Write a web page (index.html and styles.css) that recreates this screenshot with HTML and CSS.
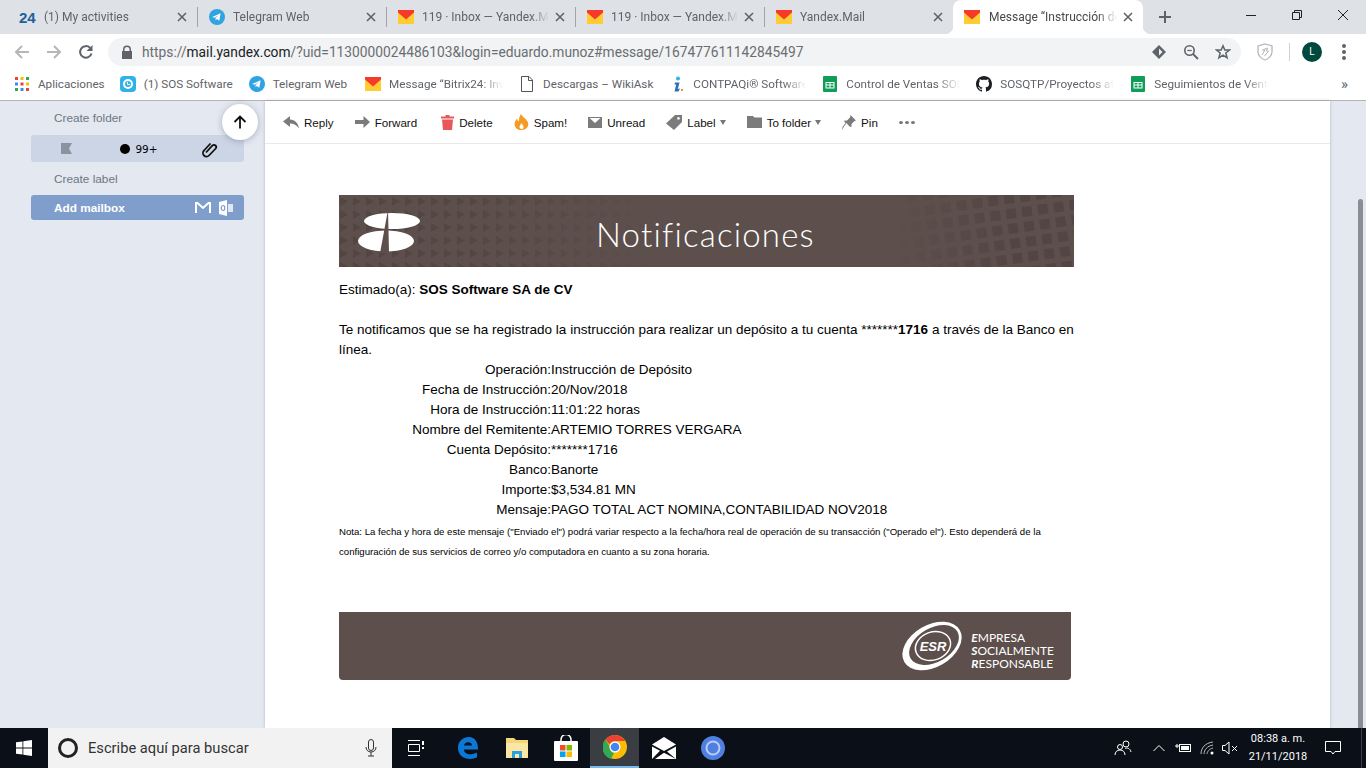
FILE: index.html
```html
<!DOCTYPE html>
<html lang="en">
<head>
    <meta charset="UTF-8">
    <title>Message "Instrucción de Depósito" — Yandex.Mail</title>
    <link rel="stylesheet" href="styles.css">
</head>
<body>
    <svg class="sprite" width="0" height="0">
        <symbol id="ya" viewBox="0 0 16 16">
            <rect y="1" width="16" height="14" fill="#ffcc33"/>
            <path d="M0 1H16V3.500L8 10.500 0 3.500Z" fill="#f5392b"/>
        </symbol>
        <symbol id="tg" viewBox="0 0 16 16">
            <circle cx="8" cy="8" r="8" fill="#2fa4e0"/>
            <path d="M3.200 7.900 11.600 4.300 10.300 11.800 7.900 10 6.700 11.300 6.500 9.100 10.200 5.900 5.500 8.800Z" fill="#fff"/>
        </symbol>
        <symbol id="sheet" viewBox="0 0 16 16">
            <rect x="1" width="14" height="16" rx="1" fill="#0f9d58"/>
            <path d="M3.500 6H12.500V12.500H3.500ZM4.500 7V8.600H7.500V7ZM8.500 7V8.600H11.500V7ZM4.500 9.600V11.500H7.500V9.600ZM8.500 9.600V11.500H11.500V9.600Z" fill="#fff" fill-rule="evenodd"/>
        </symbol>
        <symbol id="close" viewBox="0 0 10 10">
            <path d="M1 1 9 9M9 1 1 9" stroke="#5f6368" stroke-width="1.600" fill="none"/>
        </symbol>
    </svg>

    <div class="tabstrip">
        <div class="tab"><span class="tab-24">24</span><span class="tab-title">(1) My activities</span><svg class="tab-x"><use href="#close"/></svg></div>
        <div class="tab"><svg class="fav"><use href="#tg"/></svg><span class="tab-title">Telegram Web</span><svg class="tab-x"><use href="#close"/></svg></div>
        <div class="tab"><svg class="fav"><use href="#ya"/></svg><span class="tab-title">119 · Inbox — Yandex.Mail</span><svg class="tab-x"><use href="#close"/></svg></div>
        <div class="tab"><svg class="fav"><use href="#ya"/></svg><span class="tab-title">119 · Inbox — Yandex.Mail</span><svg class="tab-x"><use href="#close"/></svg></div>
        <div class="tab before-active"><svg class="fav"><use href="#ya"/></svg><span class="tab-title">Yandex.Mail</span><svg class="tab-x"><use href="#close"/></svg></div>
        <div class="tab active"><svg class="fav"><use href="#ya"/></svg><span class="tab-title">Message “Instrucción de Depósito”</span><svg class="tab-x"><use href="#close"/></svg></div>
        <svg class="newtab" width="14" height="14" viewBox="0 0 14 14"><path d="M7 1V13M1 7H13" stroke="#5f6368" stroke-width="2"/></svg>
        <div class="winctl">
            <div class="winbtn"><svg width="12" height="12" viewBox="0 0 12 12"><path d="M1 6.500H11" stroke="#222"/></svg></div>
            <div class="winbtn"><svg width="12" height="12" viewBox="0 0 12 12"><path d="M1.500 3.500H8.500V10.500H1.500ZM3.500 3.500V1.500H10.500V8.500H8.500" stroke="#222" fill="none"/></svg></div>
            <div class="winbtn"><svg width="12" height="12" viewBox="0 0 12 12"><path d="M1 1 11 11M11 1 1 11" stroke="#222"/></svg></div>
        </div>
    </div>

    <div class="addressbar">
        <svg class="nav-ico" width="16" height="16" viewBox="0 0 16 16"><path d="M15 8H2M8 2 2 8l6 6" stroke="#b4b6b9" stroke-width="2" fill="none"/></svg>
        <svg class="nav-ico" width="16" height="16" viewBox="0 0 16 16"><path d="M1 8H14M8 2l6 6-6 6" stroke="#b4b6b9" stroke-width="2" fill="none"/></svg>
        <svg class="nav-ico" width="16" height="16" viewBox="0 0 16 16"><path d="M13.500 9.500A5.800 5.800 0 1 1 12 3.800" stroke="#5f6368" stroke-width="2" fill="none"/><path d="M14.500 1V7H8.500Z" fill="#5f6368"/></svg>
        <div class="omnibox">
            <svg class="lock" width="12" height="14" viewBox="0 0 12 14"><path d="M2 6V4.500a4 4 0 0 1 8 0V6h1v8H1V6ZM3.500 6h5V4.500a2.500 2.500 0 0 0-5 0Z" fill="#5f6368" fill-rule="evenodd"/></svg>
            <span class="url">https://<b>mail.yandex.com</b>/?uid=1130000024486103&amp;login=eduardo.munoz#message/167477611142845497</span>
            <svg class="omni-ico" width="16" height="16" viewBox="0 0 16 16"><path d="M8 1 15 8 8 15 1 8Z" fill="#5f6368"/><path d="M8 4.500 11.500 8 8 11.500Z" fill="#f1f3f4"/></svg>
            <svg class="omni-ico" width="16" height="16" viewBox="0 0 16 16"><circle cx="6.500" cy="6.500" r="4.700" stroke="#5f6368" stroke-width="1.600" fill="none"/><path d="M10 10 15 15" stroke="#5f6368" stroke-width="1.800"/><path d="M4.300 6.500H8.700" stroke="#5f6368" stroke-width="1.200"/></svg>
            <svg class="omni-ico" width="16" height="16" viewBox="0 0 16 16"><path d="M8 1.800 9.800 6H14.600L10.800 9 12.100 13.800 8 11.100 3.900 13.800 5.200 9 1.400 6H6.200Z" stroke="#5f6368" stroke-width="1.500" fill="none"/></svg>
        </div>
        <svg class="shield" width="16" height="18" viewBox="0 0 16 18"><path d="M8 1 15 3V9C15 13 11 16 8 17 5 16 1 13 1 9V3Z" stroke="#b4b6b9" stroke-width="1.300" fill="none"/><path d="M5 12 8 7H5.500L10.500 5 9.500 8H11.500L7.500 13" stroke="#b4b6b9" fill="none"/></svg>
        <span class="bar-sep"></span>
        <span class="avatar">L</span>
        <span class="kebab"><i></i><i></i><i></i></span>
    </div>

    <div class="bookmarks">
        <div class="bm apps-item"><svg class="bm-ico apps" width="14" height="14" viewBox="0 0 14 14"><rect width="3" height="3" fill="#ea4335"/><rect x="5.500" width="3" height="3" fill="#fbbc05"/><rect x="11" width="3" height="3" fill="#34a853"/><rect y="5.500" width="3" height="3" fill="#4285f4"/><rect x="5.500" y="5.500" width="3" height="3" fill="#ea4335"/><rect x="11" y="5.500" width="3" height="3" fill="#fbbc05"/><rect y="11" width="3" height="3" fill="#34a853"/><rect x="5.500" y="11" width="3" height="3" fill="#4285f4"/><rect x="11" y="11" width="3" height="3" fill="#ea4335"/></svg><span>Aplicaciones</span></div>
        <div class="bm"><svg class="bm-ico" viewBox="0 0 16 16"><rect width="16" height="16" rx="4" fill="#2fb1ea"/><circle cx="8" cy="8" r="5" fill="#fff"/><circle cx="8" cy="8" r="3" fill="#2fb1ea"/><path d="M7.500 6V8.500H10" stroke="#fff" fill="none"/></svg><span>(1) SOS Software</span></div>
        <div class="bm tg-item"><svg class="bm-ico"><use href="#tg"/></svg><span>Telegram Web</span></div>
        <div class="bm cut"><svg class="bm-ico"><use href="#ya"/></svg><span>Message “Bitrix24: Invitation</span></div>
        <div class="bm"><svg class="bm-ico" viewBox="0 0 16 16"><path d="M2.500 .5H10L13.500 4V15.500H2.500ZM9.500 .5V4.500H13.500" stroke="#555" fill="#fff"/></svg><span>Descargas – WikiAsk</span></div>
        <div class="bm cut short"><svg class="bm-ico" viewBox="0 0 16 16"><circle cx="9" cy="2.500" r="2" fill="#2fb1ea"/><path d="M6 6.500H10.500L8.800 13 11 12.500 9.500 15.500H5.500L7.200 8.500 5.500 8.500Z" fill="#2a6fb8"/><rect x="12" y="13" width="2" height="2" fill="#f39c12"/></svg><span>CONTPAQi® Software y más</span></div>
        <div class="bm cut"><svg class="bm-ico"><use href="#sheet"/></svg><span>Control de Ventas SOS 2018</span></div>
        <div class="bm cut"><svg class="bm-ico" viewBox="0 0 16 16"><path fill="#1b1f23" d="M8 0C3.580 0 0 3.580 0 8c0 3.540 2.290 6.530 5.470 7.590.4.070.550-.170.550-.380 0-.190-.010-.820-.010-1.490-2.010.370-2.530-.490-2.690-.940-.090-.230-.480-.940-.820-1.130-.280-.150-.680-.520-.010-.530.630-.010 1.080.580 1.230.820.720 1.210 1.870.870 2.330.660.070-.520.280-.870.510-1.070-1.780-.2-3.640-.890-3.640-3.950 0-.870.310-1.590.820-2.150-.080-.2-.360-1.020.080-2.120 0 0 .670-.210 2.200.820.640-.180 1.320-.270 2-.270.680 0 1.360.090 2 .27 1.530-1.040 2.200-.82 2.200-.82.440 1.100.160 1.920.080 2.120.510.560.820 1.270.820 2.150 0 3.070-1.870 3.750-3.650 3.950.290.250.540.730.540 1.480 0 1.070-.010 1.930-.010 2.200 0 .210.150.460.550.380A8.013 8.013 0 0016 8c0-4.420-3.580-8-8-8z"/></svg><span>SOSQTP/Proyectos atrasados</span></div>
        <div class="bm cut"><svg class="bm-ico"><use href="#sheet"/></svg><span>Seguimientos de Ventas 2018</span></div>
        <span class="bm-more">»</span>
    </div>

    <div class="mail">
        <div class="sidebar">
            <div class="side-link">Create folder</div>
            <div class="side-filters">
                <svg width="11" height="11" viewBox="0 0 11 11"><path d="M0 0H11L8 5.500 11 11H0Z" fill="#8b93a1"/></svg>
                <span class="unread"><i></i>99+</span>
                <svg width="18" height="18" viewBox="0 0 18 18"><path d="M6 12.500 12.500 5.500a2.200 2.200 0 0 1 3.200 3L9 15.500a3.500 3.500 0 0 1-5-5L10.500 3.500" stroke="#111" stroke-width="1.800" fill="none"/></svg>
            </div>
            <div class="side-link">Create label</div>
            <div class="side-add">
                <span>Add mailbox</span>
                <svg width="16" height="12" viewBox="0 0 16 12"><path d="M1 11V1H2.500L8 6 13.500 1H15V11" stroke="#fff" stroke-width="2" fill="none"/></svg>
                <svg width="14" height="16" viewBox="0 0 14 16"><path d="M0 2 8 0V16L0 14Z" fill="#fff"/><path d="M9 4H14V12H9Z" fill="#fff" fill-opacity=".75"/><ellipse cx="4" cy="8" rx="1.800" ry="2.500" fill="none" stroke="#7f9ecb" stroke-width="1.200"/></svg>
            </div>
            <div class="scrolltop"><svg width="14" height="14" viewBox="0 0 14 14"><path d="M7 13.500V1.500M1.500 7 7 1.500 12.500 7" stroke="#111" stroke-width="1.800" fill="none"/></svg></div>
        </div>

        <div class="content">
            <div class="toolbar">
                <div class="act"><svg width="16" height="14" viewBox="0 0 16 14"><path d="M7 1 0 6.500 7 12V8.500C11 8.500 13.500 10 16 13.500 15 8 12 4.800 7 4.500Z" fill="#7b7b7b"/></svg>Reply</div>
                <div class="act"><svg width="15" height="12" viewBox="0 0 15 12"><path d="M0 4H8.500V0L15 6 8.500 12V8H0Z" fill="#7b7b7b"/></svg>Forward</div>
                <div class="act delete"><svg width="13" height="15" viewBox="0 0 13 15"><path d="M4.500 0H8.500V1.500H13V3.500H0V1.500H4.500ZM1 4.500H12L11 15H2Z" fill="#e9575a"/></svg>Delete</div>
                <div class="act"><svg width="15" height="16" viewBox="0 0 15 16"><path d="M7 0C8 3 12 4 13.800 8 15.500 12 12.500 16 7.500 16 3 16 0 13 .7 9 1 7 2.500 5.500 3 4.500 3.500 6 4 7 5 7.500 4.800 5 5.500 2 7 0ZM7.500 9C6.500 11 5.500 11.500 5.500 13 5.500 14.200 6.500 15 7.500 15 8.800 15 9.700 14 9.500 12.800 9.400 11.500 8 10.500 7.500 9Z" fill="#f59a23" fill-rule="evenodd"/></svg>Spam!</div>
                <div class="act"><svg width="14" height="11" viewBox="0 0 14 11"><path d="M0 0H14V11H0ZM1.500 1 7 6 12.500 1Z" fill="#7b7b7b" fill-rule="evenodd"/></svg>Unread</div>
                <div class="act"><svg width="16" height="15" viewBox="0 0 16 15"><path d="M9 0H16V7L8 15 0 8.500ZM12.500 2A1.400 1.400 0 1 0 12.510 2Z" fill="#7b7b7b" fill-rule="evenodd"/></svg>Label<i class="caret"></i></div>
                <div class="act"><svg width="15" height="12" viewBox="0 0 15 12"><path d="M0 0H6L7.500 1.500H15V12H0Z" fill="#7b7b7b"/></svg>To folder<i class="caret"></i></div>
                <div class="act"><svg width="14" height="15" viewBox="0 0 14 15"><path d="M8.500 0 14 5.500 12.500 6 9.500 9 9.500 12 7.500 11.500 4.500 8 2 11.500 0 15 .5 12 3.500 8 1.800 5.800 5 5.500 8 2.500Z" fill="#7b7b7b"/></svg>Pin</div>
                <div class="dots"><i></i><i></i><i></i></div>
            </div>

            <div class="letter">
                <div class="banner">
                    <svg class="banner-art" width="735" height="72" viewBox="0 0 735 72">
                        <defs>
                            <pattern id="tri" width="13" height="13" patternUnits="userSpaceOnUse"><path d="M1 2 9 6.500 1 11Z" fill="#524542"/></pattern>
                            <pattern id="sq" width="16" height="15" patternUnits="userSpaceOnUse" patternTransform="rotate(-8)"><rect x="2" y="2" width="10" height="10" fill="#524543"/></pattern>
                            <linearGradient id="fade-l"><stop offset="0" stop-color="#fff"/><stop offset=".2" stop-color="#ccc"/><stop offset=".42" stop-color="#000"/></linearGradient>
                            <linearGradient id="fade-r"><stop offset=".76" stop-color="#000"/><stop offset=".92" stop-color="#fff"/></linearGradient>
                            <mask id="mask-l"><rect width="735" height="72" fill="url(#fade-l)"/></mask>
                            <mask id="mask-r"><rect width="735" height="72" fill="url(#fade-r)"/></mask>
                        </defs>
                        <rect width="735" height="72" fill="url(#tri)" mask="url(#mask-l)"/>
                        <rect width="735" height="72" fill="url(#sq)" mask="url(#mask-r)"/>
                        <ellipse cx="53" cy="26" rx="28" ry="8" fill="#fff"/>
                        <ellipse cx="47" cy="46" rx="28" ry="10.500" fill="#fff"/>
                        <path d="M49 15 41 58H50Z" fill="#5d4f4c"/>
                    </svg>
                    <span class="banner-title">Notificaciones</span>
                </div>
                <div class="body-text">
                    <p>Estimado(a): <b>SOS Software SA de CV</b></p>
                    <p><br></p>
                    <p>Te notificamos que se ha registrado la instrucción para realizar un depósito a tu cuenta *******<b>1716</b> a través de la Banco en línea.</p>
                    <div class="details">
                        <span class="k">Operación:</span><span>Instrucción de Depósito</span>
                        <span class="k">Fecha de Instrucción:</span><span>20/Nov/2018</span>
                        <span class="k">Hora de Instrucción:</span><span>11:01:22 horas</span>
                        <span class="k">Nombre del Remitente:</span><span>ARTEMIO TORRES VERGARA</span>
                        <span class="k">Cuenta Depósito:</span><span>*******1716</span>
                        <span class="k">Banco:</span><span>Banorte</span>
                        <span class="k">Importe:</span><span>$3,534.81 MN</span>
                        <span class="k">Mensaje:</span><span>PAGO TOTAL ACT NOMINA,CONTABILIDAD NOV2018</span>
                    </div>
                    <p class="nota">Nota: La fecha y hora de este mensaje ("Enviado el") podrá variar respecto a la fecha/hora real de operación de su transacción ("Operado el"). Esto dependerá de la configuración de sus servicios de correo y/o computadora en cuanto a su zona horaria.</p>
                </div>
                <div class="footer-band">
                    <svg width="62" height="50" viewBox="0 0 62 50">
                        <ellipse cx="31" cy="25" rx="32" ry="21" fill="#fff" transform="rotate(-30 31 25)"/>
                        <ellipse cx="33" cy="24" rx="27" ry="17" fill="#5d4f4c" transform="rotate(-30 33 24)"/>
                        <ellipse cx="32" cy="25" rx="18" ry="14" fill="#5d4f4c" stroke="#fff" stroke-width="1.500" transform="rotate(-20 32 25)"/>
                        <text x="32" y="30" text-anchor="middle" class="esr-mark">ESR</text>
                    </svg>
                    <div class="esr-text"><div><b>E</b>MPRESA</div><div><b>S</b>OCIALMENTE</div><div><b>R</b>ESPONSABLE</div></div>
                </div>
            </div>
        </div>

        <div class="gutter"><div class="thumb"></div></div>
    </div>

    <div class="taskbar">
        <div class="start"><svg width="16" height="16" viewBox="0 0 16 16"><path d="M0 2.300 6.500 1.400V7.600H0ZM7.300 1.300 16 0V7.600H7.300ZM0 8.400H6.500V14.600L0 13.700ZM7.300 8.400H16V16L7.300 14.700Z" fill="#fff"/></svg></div>
        <div class="search">
            <span class="cortana"></span>
            <span class="search-text">Escribe aquí para buscar</span>
            <svg width="12" height="18" viewBox="0 0 12 18"><rect x="3.500" y=".5" width="5" height="11" rx="2.500" fill="none" stroke="#333"/><path d="M1 8C1 11 3 13 6 13S11 11 11 8M6 13V17M3 17H9" fill="none" stroke="#333"/></svg>
        </div>
        <div class="task first"><svg width="16" height="16" viewBox="0 0 16 16"><path d="M0 .5H12M0 15.500H12M.5 4.500H11.500V11.500H.5Z" stroke="#fff" fill="none"/><rect x="14" y="1" width="2" height="4" fill="#fff"/><rect x="14" y="7" width="2" height="2" fill="#fff"/></svg></div>
        <div class="task"><svg width="22" height="24" viewBox="0 0 22 24"><path d="M1 12C1 5 6 1 12 1 18 1 21 6 21 13.500H7C7 18 13 20 20 16.500V21.500C12 25 1 22 1 12ZM7 9.500H15C15 5.500 8 5 7 9.500Z" fill="#0b78d7" fill-rule="evenodd"/></svg></div>
        <div class="task"><svg width="22" height="20" viewBox="0 0 22 20"><path d="M0 0H8L10 2H22V20H0Z" fill="#f5d77a"/><rect y="5" width="22" height="15" fill="#fbe7a3"/><path d="M6 20V13H16V20H13V16H9V20Z" fill="#2aa0dc"/></svg></div>
        <div class="task"><svg width="24" height="26" viewBox="0 0 24 26"><rect y="6" width="24" height="20" rx="1" fill="#fff"/><path d="M7 8V4.500a5 5 0 0 1 10 0V8" stroke="#fff" stroke-width="1.500" fill="none"/><rect x="6" y="10" width="5.500" height="5.500" fill="#f25022"/><rect x="12.500" y="10" width="5.500" height="5.500" fill="#7fba00"/><rect x="6" y="16.500" width="5.500" height="5.500" fill="#00a4ef"/><rect x="12.500" y="16.500" width="5.500" height="5.500" fill="#ffb900"/></svg></div>
        <div class="task current"><svg width="24" height="24" viewBox="0 0 24 24"><circle cx="12" cy="12" r="12" fill="#fbbc05"/><path d="M12 0A12 12 0 0 1 22.400 6H12A6 6 0 0 0 6.500 9.500L2.500 4.600A12 12 0 0 1 12 0Z" fill="#ea4335"/><path d="M2.500 4.600 6.800 12A6 6 0 0 0 11 18L8 24A12 12 0 0 1 2.500 4.600Z" fill="#34a853"/><circle cx="12" cy="12" r="5.500" fill="#fff"/><circle cx="12" cy="12" r="4.300" fill="#4285f4"/></svg></div>
        <div class="task"><svg width="24" height="22" viewBox="0 0 24 22"><path d="M12 0 24 7.500 12 14 0 7.500Z" fill="#fff"/><path d="M0 9.500 8 13.800 0 22ZM24 22H3L12 15.800ZM24 22V9.500L15 14.500Z" fill="#fff"/></svg></div>
        <div class="task"><svg width="24" height="24" viewBox="0 0 24 24"><circle cx="12" cy="12" r="12" fill="#4f80e1"/><circle cx="12" cy="12" r="6.500" fill="none" stroke="#b9cdf5" stroke-width="2"/></svg></div>

        <div class="tray">
            <svg width="18" height="18" viewBox="0 0 18 18"><circle cx="12" cy="5" r="3" stroke="#fff" fill="none"/><circle cx="6" cy="8" r="2.500" stroke="#fff" fill="none"/><path d="M1 16C1 13 3 11 6 11S11 13 11 16M11 9.500C13 8.500 16 9 17 13" stroke="#fff" fill="none"/></svg>
            <svg class="chev" width="12" height="8" viewBox="0 0 12 8"><path d="M.5 7 6 1.500 11.500 7" stroke="#fff" fill="none"/></svg>
            <svg class="batt" width="16" height="12" viewBox="0 0 16 12"><rect x="4.500" y="2.500" width="11" height="7" stroke="#fff" fill="none"/><rect x="6" y="4" width="8" height="4" fill="#fff"/><path d="M0 4H4M2 2V6" stroke="#fff"/></svg>
            <svg class="wifi" width="16" height="14" viewBox="0 0 16 14"><path d="M1 13C1 7 5 2 13 1M4 13C4 9 7 5 13 4M7 13C7 11 9 8 13 7" stroke="#bbb" fill="none"/><circle cx="12" cy="12" r="1.500" fill="#fff"/></svg>
            <svg class="vol" width="16" height="14" viewBox="0 0 16 14"><path d="M.5 4.500H3L7 1V13L3 9.500H.5ZM10 5 15 10M15 5 10 10" stroke="#fff" fill="none"/></svg>
            <div class="clock"><div>08:38 a. m.</div><div>21/11/2018</div></div>
            <svg width="16" height="14" viewBox="0 0 16 14"><path d="M.5 .5H15.500V10.500H10L8 13 6 10.500H.5Z" stroke="#fff" fill="none"/></svg>
        </div>
    </div>
</body>
</html>
```

FILE: styles.css
```css
html, body {
    margin: 0;
    height: 768px;
    overflow: hidden;
}

body {
    width: 1366px;
    display: flex;
    flex-direction: column;
    font-family: "Liberation Sans", Arial, sans-serif;
    background: #fff;
}

.sprite {
    position: absolute;
}

/* browser chrome */
.tabstrip {
    height: 34px;
    flex: none;
    display: flex;
    align-items: stretch;
    padding-left: 9px;
    background: #dee1e6;
}

.tab {
    width: 177px;
    flex: none;
    display: flex;
    align-items: center;
    padding-left: 11px;
    margin-right: 1px;
    position: relative;
    font: 12px Roboto, "Open Sans", sans-serif;
    color: #5f6368;
}

.tab::after {
    content: "";
    position: absolute;
    right: -1px;
    top: 7px;
    bottom: 7px;
    width: 1px;
    background: #a0a3a8;
}

.tab.before-active {
    margin-right: 0;
}

.tab.before-active::after {
    display: none;
}

.tab.active {
    width: 179px;
    margin-right: 0;
    background: #fff;
    border-radius: 8px 8px 0 0;
    color: #45484c;
}

.tab.active::before,
.tab.active::after {
    content: "";
    position: absolute;
    top: auto;
    bottom: 0;
    width: 8px;
    height: 8px;
}

.tab.active::before {
    left: -8px;
    background: radial-gradient(circle at 0 0, #dee1e6 8px, #fff 8.500px);
}

.tab.active::after {
    right: -8px;
    background: radial-gradient(circle at 100% 0, #dee1e6 8px, #fff 8.500px);
}

.fav {
    width: 16px;
    height: 16px;
    flex: none;
}

.tab-24 {
    width: 16px;
    flex: none;
    margin-left: -1px;
    margin-right: 1px;
    font: bold 15px "Liberation Sans", sans-serif;
    color: #20609f;
}

.tab-title {
    flex: 1;
    min-width: 0;
    margin-left: 8px;
    margin-right: 6px;
    white-space: nowrap;
    overflow: hidden;
    -webkit-mask-image: linear-gradient(to right, #000 85%, transparent);
    mask-image: linear-gradient(to right, #000 85%, transparent);
}

.tab.active .tab-title {
    margin-left: 9px;
}

.tab-x {
    width: 10px;
    height: 10px;
    flex: none;
    margin-right: 10px;
}

.newtab {
    align-self: center;
    margin-left: 15px;
}

.winctl {
    margin-left: auto;
    display: flex;
}

.winbtn {
    width: 46px;
    display: flex;
    align-items: center;
    justify-content: center;
    padding-bottom: 4px;
}

.addressbar {
    height: 33px;
    flex: none;
    display: flex;
    align-items: flex-start;
    padding-left: 14px;
    background: #fff;
}

.nav-ico {
    margin: 10px 16px 0 0;
}

.nav-ico:nth-child(3) {
    margin-right: 14px;
}

.omnibox {
    width: 1133px;
    height: 28px;
    box-sizing: border-box;
    margin-top: 4px;
    display: flex;
    align-items: center;
    padding: 0 10px 0 13px;
    background: #f1f3f4;
    border-radius: 14px;
}

.lock {
    margin-right: 9px;
}

.url {
    flex: 1;
    font: 13.750px Roboto, sans-serif;
    color: #6a6d71;
    white-space: nowrap;
}

.url b {
    font-weight: 400;
    color: #202124;
}

.omni-ico {
    margin-left: 16px;
}

.shield {
    margin: 9px 0 0 16px;
}

.bar-sep {
    width: 1px;
    height: 18px;
    margin: 9px 0 0 16px;
    background: #d0d2d5;
}

.avatar {
    width: 20px;
    height: 20px;
    margin: 8px 0 0 12px;
    border-radius: 50%;
    background: #00493e;
    color: #fff;
    font: 10px/20px Roboto, sans-serif;
    text-align: center;
}

.kebab {
    margin: 10px 0 0 20px;
    display: flex;
    flex-direction: column;
    gap: 2px;
}

.kebab i {
    width: 4px;
    height: 4px;
    border-radius: 50%;
    background: #5f6368;
}

.bookmarks {
    height: 34px;
    flex: none;
    box-sizing: border-box;
    display: flex;
    align-items: center;
    padding-left: 15px;
    gap: 16px;
    background: #fff;
    border-bottom: 1px solid #b5b5b5;
    font: 11.700px Roboto, sans-serif;
    color: #5f6368;
}

.bm {
    display: flex;
    align-items: center;
    white-space: nowrap;
}

.bm-ico {
    width: 16px;
    height: 16px;
    flex: none;
    margin-right: 8px;
}

.bm-ico.apps {
    width: 14px;
    height: 14px;
    margin-right: 9px;
}

.apps-item {
    margin-right: -1px;
}

.tg-item {
    margin-right: 2px;
}

.bm.cut span {
    width: 114px;
    overflow: hidden;
    -webkit-mask-image: linear-gradient(to right, #000 80%, transparent);
    mask-image: linear-gradient(to right, #000 80%, transparent);
}

.bm.cut.short span {
    width: 113px;
}

.bm-more {
    margin-left: auto;
    margin-right: 18px;
    font-size: 15px;
}

/* mail */
.mail {
    flex: 1;
    min-height: 0;
    display: flex;
    background: #e3e8f1;
}

.sidebar {
    width: 265px;
    flex: none;
    box-sizing: border-box;
    padding: 8px 21px 0 31px;
    position: relative;
    font-size: 11.800px;
}

.side-link {
    padding-left: 23px;
    line-height: 18px;
    color: #6f7682;
}

.side-filters {
    height: 27px;
    margin: 8px 0;
    display: flex;
    align-items: center;
    justify-content: space-between;
    padding: 0 26px 0 30px;
    background: #cbd5e5;
    border-radius: 3px;
}

.unread {
    display: flex;
    align-items: center;
    gap: 5px;
    margin-left: 6px;
    font: 10.500px "DejaVu Sans", sans-serif;
}

.unread i {
    width: 10px;
    height: 10px;
    border-radius: 50%;
    background: #000;
}

.side-add {
    height: 25px;
    margin-top: 7px;
    display: flex;
    align-items: center;
    padding: 0 11px 0 23px;
    gap: 8px;
    background: #7f9ecb;
    border-radius: 3px;
    color: #fff;
    font-weight: bold;
}

.side-add span {
    flex: 1;
}

.scrolltop {
    position: absolute;
    left: 222px;
    top: 3px;
    width: 36px;
    height: 36px;
    display: flex;
    align-items: center;
    justify-content: center;
    background: #fff;
    border-radius: 50%;
    box-shadow: 0 1px 6px rgba(60, 70, 90, .35);
}

.content {
    width: 1065px;
    flex: none;
    background: #fff;
    box-shadow: 0 0 3px rgba(90, 100, 120, .35);
    overflow: hidden;
}

.toolbar {
    height: 42px;
    display: flex;
    align-items: center;
    gap: 21px;
    padding-left: 18px;
    border-bottom: 1px solid #e9e9e9;
    font-size: 11.600px;
    color: #111;
}

.act {
    display: flex;
    align-items: center;
    gap: 5px;
}

.act.delete {
    margin-left: 3px;
}

.caret {
    width: 0;
    height: 0;
    margin-left: -1px;
    border: 3px solid transparent;
    border-top: 5px solid #777;
    border-bottom: 0;
}

.dots {
    display: flex;
    gap: 2px;
}

.dots i {
    width: 4px;
    height: 3px;
    border-radius: 50%;
    background: #777;
}

.letter {
    width: 735px;
    margin: 51px 0 0 74px;
}

.banner {
    height: 72px;
    display: flex;
    align-items: center;
    position: relative;
    background: #5d4f4c;
}

.banner-art {
    position: absolute;
    left: 0;
    top: 0;
}

.banner-title {
    position: relative;
    margin-left: 257px;
    padding-top: 5px;
    font: 300 33px Lato, sans-serif;
    letter-spacing: 1.200px;
    color: #fff;
}

.body-text {
    margin-top: 13px;
    font-size: 13.500px;
    line-height: 20px;
    color: #000;
}

.body-text p {
    margin: 0;
}

.details {
    display: grid;
    grid-template-columns: 212px 1fr;
}

.details .k {
    text-align: right;
}

.body-text .nota {
    margin-top: 2px;
    font-size: 9.650px;
}

.footer-band {
    width: 732px;
    height: 68px;
    box-sizing: border-box;
    margin-top: 50px;
    display: flex;
    align-items: center;
    justify-content: flex-end;
    gap: 8px;
    padding-right: 17px;
    background: #5d4f4c;
    border-radius: 0 0 4px 4px;
}

.esr-mark {
    font: italic bold 13px "Liberation Sans", sans-serif;
    fill: #fff;
}

.esr-text {
    margin-top: 9px;
    font: 12px/13px Lato, sans-serif;
    color: #fff;
}

.esr-text b {
    font-style: italic;
}

.gutter {
    flex: 1;
    display: flex;
    justify-content: flex-end;
    padding: 98px 3px 0 0;
}

.thumb {
    width: 5px;
    background: #8a8d92;
    border-radius: 3px 3px 0 0;
}

/* windows taskbar */
.taskbar {
    height: 40px;
    flex: none;
    display: flex;
    align-items: stretch;
    background: #0b0f17;
    color: #fff;
}

.start {
    width: 48px;
    display: flex;
    align-items: center;
    justify-content: center;
}

.search {
    width: 344px;
    box-sizing: border-box;
    display: flex;
    align-items: center;
    padding: 0 15px 0 10px;
    background: #f2f2f2;
    font: 14.700px Roboto, sans-serif;
    color: #333;
}

.cortana {
    width: 14px;
    height: 14px;
    margin-right: 10px;
    border: 3px solid #222;
    border-radius: 50%;
}

.search-text {
    flex: 1;
}

.task {
    width: 49px;
    display: flex;
    align-items: center;
    justify-content: center;
    box-sizing: border-box;
}

.task.first {
    width: 51px;
    padding-right: 3px;
}

.task.current {
    background: #3a3d42;
    border-bottom: 2px solid #76b9ed;
}

.tray {
    margin: 0 4px 0 auto;
    display: flex;
    align-items: center;
    padding-right: 20px;
    border-right: 1px solid #3a3d42;
}

.chev {
    margin-left: 21px;
}

.batt {
    margin-left: 10px;
}

.wifi {
    margin-left: 9px;
}

.vol {
    margin-left: 6px;
}

.clock {
    width: 72px;
    margin: 0 11px 0 4px;
    text-align: center;
    font: 11px/18px Roboto, sans-serif;
}
```
